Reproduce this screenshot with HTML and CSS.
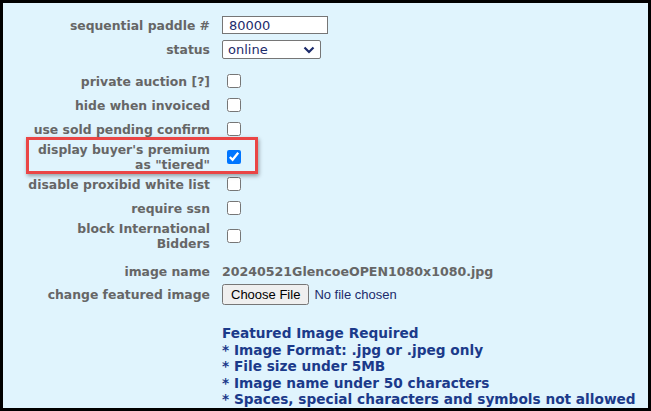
FILE: index.html
```html
<!DOCTYPE html>
<html lang="en">

<head>
    <meta charset="UTF-8">
    <meta name="viewport" content="width=device-width, initial-scale=1.0">
    <title>Auction Settings</title>

    <link rel="stylesheet" href="styles.css">
</head>

<body>
    <div class="frame">
        <form class="settings">
            <div class="row">
                <label class="lbl" for="paddle">sequential paddle #</label>
                <div class="val"><input type="text" id="paddle" class="txt" value="80000"></div>
            </div>
            <div class="row">
                <label class="lbl" for="status">status</label>
                <div class="val">
                    <span class="sel-wrap">
                        <select id="status" class="sel">
                            <option>online</option>
                            <option>offline</option>
                        </select>
                        <svg class="chev" width="12" height="8" viewBox="0 0 12 8">
                            <path d="M1.5 1.5 L6 6 L10.5 1.5" fill="none" stroke="#1c2b6b" stroke-width="2.2" />
                        </svg>
                    </span>
                </div>
            </div>

            <div class="spacer"></div>

            <div class="row">
                <label class="lbl" for="private">private auction [?]</label>
                <div class="val"><input type="checkbox" id="private"></div>
            </div>
            <div class="row">
                <label class="lbl" for="hide">hide when invoiced</label>
                <div class="val"><input type="checkbox" id="hide"></div>
            </div>
            <div class="row">
                <label class="lbl" for="sold">use sold pending confirm</label>
                <div class="val"><input type="checkbox" id="sold"></div>
            </div>
            <div class="row tall marked">
                <label class="lbl" for="tiered">display buyer's premium as "tiered"</label>
                <div class="val"><input type="checkbox" id="tiered" checked></div>
            </div>
            <div class="row">
                <label class="lbl" for="white">disable proxibid white list</label>
                <div class="val"><input type="checkbox" id="white"></div>
            </div>
            <div class="row">
                <label class="lbl" for="ssn">require ssn</label>
                <div class="val"><input type="checkbox" id="ssn"></div>
            </div>
            <div class="row tall">
                <label class="lbl" for="intl">block International Bidders</label>
                <div class="val"><input type="checkbox" id="intl"></div>
            </div>

            <div class="row gap">
                <span class="lbl">image name</span>
                <div class="val strong">20240521GlencoeOPEN1080x1080.jpg</div>
            </div>
            <div class="row">
                <label class="lbl" for="featured">change featured image</label>
                <div class="val"><input type="file" id="featured" class="file"></div>
            </div>

            <div class="notes">
                <p>Featured Image Required</p>
                <p>* Image Format: .jpg or .jpeg only</p>
                <p>* File size under 5MB</p>
                <p>* Image name under 50 characters</p>
                <p>* Spaces, special characters and symbols not allowed</p>
            </div>
        </form>
    </div>
</body>

</html>
```

FILE: styles.css
```css
* {
    box-sizing: border-box;
    margin: 0;
}

body {
    background: #000;
    font-family: "DejaVu Sans", Verdana, sans-serif;
    font-size: 12.4px;
}

.frame {
    height: 100vh;
    border: 3px solid #000;
    background: #e0f4fd;
    overflow: hidden;
}

.settings {
    padding-top: 10px;
}

.row {
    display: flex;
    align-items: center;
    min-height: 24px;
}

.row.tall {
    min-height: 31px;
}

.row.gap {
    margin-top: 9px;
    min-height: 22px;
}

.spacer {
    height: 8px;
}

.lbl {
    width: 207px;
    padding-left: 21px;
    text-align: right;
    font-weight: bold;
    color: #666;
    line-height: 15px;
}

.val {
    margin-left: 12px;
    display: flex;
    align-items: center;
}

.strong {
    font-weight: bold;
    font-size: 12.6px;
    color: #666;
}

.txt {
    width: 106px;
    height: 18px;
    border: 1px solid #767676;
    padding: 0 6px;
    font-family: "DejaVu Sans", Verdana, sans-serif;
    font-size: 13px;
    color: #1c2b6b;
    background: #fff;
}

.sel-wrap {
    position: relative;
    display: inline-block;
}

.sel {
    appearance: none;
    width: 99px;
    height: 19px;
    padding: 0 0 0 5px;
    font-family: "DejaVu Sans", Verdana, sans-serif;
    font-size: 13px;
    color: #1c2b6b;
    background: #fff;
    border: 1px solid #767676;
    border-radius: 2px;
    display: block;
}

.chev {
    position: absolute;
    right: 6px;
    top: 6px;
    pointer-events: none;
}

input[type="checkbox"] {
    width: 14px;
    height: 14px;
    margin: 0 0 0 5px;
}

.file {
    height: 21px;
    font-family: "Liberation Sans", Arial, sans-serif;
    font-size: 13px;
    color: #1c2b6b;
}

.file::file-selector-button {
    height: 21px;
    padding: 0 7px;
    margin-right: 5px;
}

.marked {
    position: relative;
}

.marked::after {
    content: "";
    position: absolute;
    left: 23px;
    width: 226px;
    top: -4px;
    bottom: -2px;
    border: 3px solid #ea4545;
    box-shadow: 1px 2px 4px rgba(0, 0, 0, 0.35);
    pointer-events: none;
}

.notes {
    margin: 19px 0 0 219px;
    font-size: 13.7px;
    font-weight: bold;
    color: #1b3a8a;
    line-height: 16.5px;
}
```
